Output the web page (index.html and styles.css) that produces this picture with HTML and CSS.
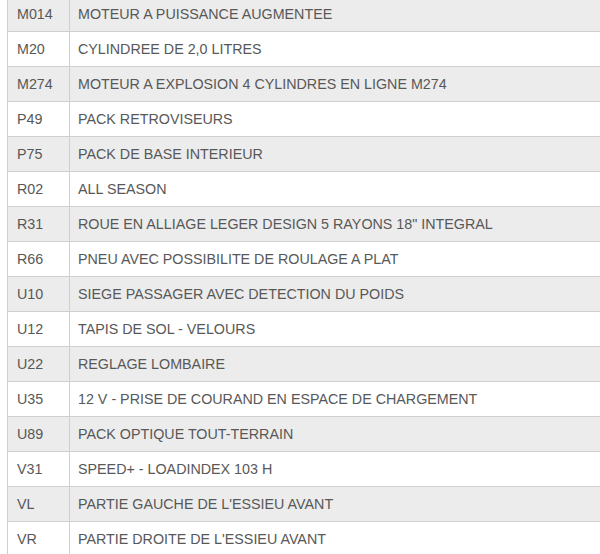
FILE: index.html
```html
<!DOCTYPE html>
<html>
<head>
<meta charset="utf-8">
<link rel="stylesheet" href="styles.css">
</head>
<body>
<div class="wrap">
<table class="opts">
<tbody>
<tr class="odd"><td class="code">M014</td><td class="desc">MOTEUR A PUISSANCE AUGMENTEE</td></tr>
<tr><td class="code">M20</td><td class="desc">CYLINDREE DE 2,0 LITRES</td></tr>
<tr class="odd"><td class="code">M274</td><td class="desc">MOTEUR A EXPLOSION 4 CYLINDRES EN LIGNE M274</td></tr>
<tr><td class="code">P49</td><td class="desc">PACK RETROVISEURS</td></tr>
<tr class="odd"><td class="code">P75</td><td class="desc">PACK DE BASE INTERIEUR</td></tr>
<tr><td class="code">R02</td><td class="desc">ALL SEASON</td></tr>
<tr class="odd"><td class="code">R31</td><td class="desc">ROUE EN ALLIAGE LEGER DESIGN 5 RAYONS 18" INTEGRAL</td></tr>
<tr><td class="code">R66</td><td class="desc">PNEU AVEC POSSIBILITE DE ROULAGE A PLAT</td></tr>
<tr class="odd"><td class="code">U10</td><td class="desc">SIEGE PASSAGER AVEC DETECTION DU POIDS</td></tr>
<tr><td class="code">U12</td><td class="desc">TAPIS DE SOL - VELOURS</td></tr>
<tr class="odd"><td class="code">U22</td><td class="desc">REGLAGE LOMBAIRE</td></tr>
<tr><td class="code">U35</td><td class="desc">12 V - PRISE DE COURAND EN ESPACE DE CHARGEMENT</td></tr>
<tr class="odd"><td class="code">U89</td><td class="desc">PACK OPTIQUE TOUT-TERRAIN</td></tr>
<tr><td class="code">V31</td><td class="desc">SPEED+ - LOADINDEX 103 H</td></tr>
<tr class="odd"><td class="code">VL</td><td class="desc">PARTIE GAUCHE DE L'ESSIEU AVANT</td></tr>
<tr><td class="code">VR</td><td class="desc">PARTIE DROITE DE L'ESSIEU AVANT</td></tr>
</tbody>
</table>
</div>
</body>
</html>
```

FILE: styles.css
```css
html, body {
  margin: 0;
  padding: 0;
  background: #ffffff;
  overflow: hidden;
}
.wrap {
  width: 600px;
  height: 554px;
  overflow: hidden;
  padding-left: 7px;
  box-sizing: border-box;
}
.opts {
  border-collapse: collapse;
  width: 620px;
  margin-top: -4px;
  font-family: "Liberation Sans", Arial, sans-serif;
  font-size: 14.3px;
  color: #585858;
}
.opts td {
  height: 34px;
  padding: 0 0 0 8px;
  border: 1px solid #cfcfcf;
  vertical-align: middle;
  white-space: nowrap;
}
.opts .code {
  width: 52px;
  padding-left: 9px;
}
.opts tr.odd td {
  background: #ececec;
}
```
